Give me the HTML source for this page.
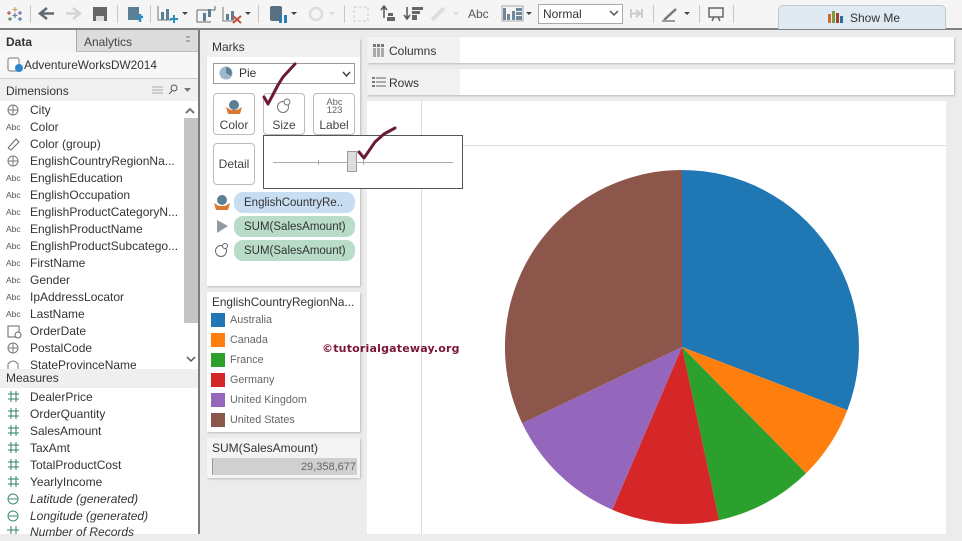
<!DOCTYPE html>
<html><head><meta charset="utf-8"><style>
html,body{margin:0;padding:0;width:962px;height:534px;overflow:hidden;background:#ececec;font-family:"Liberation Sans",sans-serif;}
div{position:absolute;box-sizing:border-box;white-space:nowrap;}
.f{left:30px;font-size:12px;color:#333;height:17px;line-height:17px;}
.a{left:6px;font-size:8.5px;color:#555;height:17px;line-height:17px;}
.btn{background:#fff;border:1px solid #bbb;border-radius:4px;text-align:center;font-size:12px;color:#444;}
.pill{left:234px;width:121px;height:21px;border-radius:9px;font-size:11.5px;line-height:23px;padding-left:10px;color:#333;}
.sw{left:211px;width:14px;height:14px;}
.lg{left:230px;font-size:10.8px;color:#666;height:14px;line-height:15px;}
.card{background:#fff;box-shadow:1px 1px 2px #bbb;}
svg{position:absolute;left:0;top:0;}
</style></head><body>
<div style="left:0;top:0;width:962px;height:30px;background:#f5f5f5;border-bottom:2px solid #7f7f7f"></div>
<div style="left:778px;top:5px;width:168px;height:24px;background:#dfeaf3;border:1px solid #bcc8d2;border-bottom:none;border-radius:5px 5px 0 0"></div>
<div style="left:850px;top:11px;font-size:12px;color:#333">Show Me</div>
<div style="left:538px;top:4px;width:85px;height:20px;background:#fff;border:1px solid #aaa;font-size:12px;line-height:18px;padding-left:4px;color:#333">Normal</div>
<div style="left:468px;top:7px;font-size:12px;color:#555">Abc</div>
<svg width="962" height="534" viewBox="0 0 962 534">
<g fill="none" stroke="#c8c8c8"><path d="M30.500 5V23M117.500 5V23M150.500 5V23M258.500 5V23M344.500 5V23M653.500 5V23M699.500 5V23M733.500 5V23"/></g>
<g stroke-width="1.200" fill="none"><path d="M15 7V12M12.500 9.500H17.500" stroke="#d8a060"/><path d="M9 11V15M7 13H11" stroke="#c05050"/><path d="M20 11V15M18 13H22" stroke="#7a6ab0"/><path d="M15 13V18M12.500 15.500H17.500" stroke="#6a7f9a"/><path d="M10 17V21M8 19H12" stroke="#5a8f5a"/><path d="M20 17V21M18 19H22" stroke="#4a7fb0"/></g>
<path d="M47 8L40 13.500L47 19M40 13.500H54" fill="none" stroke="#5f6b75" stroke-width="2.500"/>
<path d="M73 8L80 13.500L73 19M66 13.500H80" fill="none" stroke="#d5d5d5" stroke-width="2.500"/>
<path d="M93 7H107V21H93Z" fill="#666"/><path d="M96 16H104V21H96Z" fill="#ddd"/>
<rect x="128" y="7" width="11" height="13" fill="#5b7f95"/><path d="M137 17H143M140 14V22" stroke="#2a8fc0" stroke-width="2.500"/>
<path d="M158 6V20H172" fill="none" stroke="#777"/><path d="M161 12h3v8h-3zM166 9h3v11h-3z" fill="#5b7f95"/><path d="M170 19H178M174 15V23" stroke="#2a8fc0" stroke-width="2"/>
<path d="M182 12L188 12L185 15Z" fill="#444"/>
<path d="M197 10H215V6M197 10V22H211" fill="none" stroke="#666"/><path d="M203 13h3v8h-3zM208 9h3v8h-3z" fill="#5b7f95"/>
<path d="M223 7V21H236" fill="none" stroke="#777"/><path d="M226 14h3v6h-3zM231 11h3v9h-3z" fill="#5b7f95"/><path d="M233 16L241 23M241 16L233 23" stroke="#c0503a" stroke-width="2"/>
<path d="M245 12L251 12L248 15Z" fill="#444"/>
<rect x="270" y="6" width="12" height="15" rx="2" fill="#5a6f80"/><path d="M279 15h3v8h-3zM284 15h3v8h-3z" fill="#2a7fb0"/>
<path d="M291 12L297 12L294 15Z" fill="#444"/>
<circle cx="316" cy="14" r="6" fill="none" stroke="#ddd" stroke-width="2.500"/><path d="M329 12L335 12L332 16Z" fill="#ddd"/>
<rect x="354" y="7" width="14" height="14" fill="none" stroke="#ccc" stroke-dasharray="3 2"/>
<path d="M384 7V18M381 10L384 6L387 10" stroke="#555" fill="none" stroke-width="1.500"/><path d="M388 13h5v3h-5zM387 17h8v4h-8z" fill="#666"/>
<path d="M407 7V18M404 15L407 19L410 15" stroke="#555" fill="none" stroke-width="1.500"/><path d="M412 7h11v3h-11zM412 11h8v3h-8zM412 15h5v5h-5z" fill="#666"/>
<path d="M432 20L444 8" stroke="#ddd" stroke-width="4"/><path d="M453 12L459 12L456 16Z" fill="#ddd"/>
<path d="M503 8h3v12h-3zM507 14h3v6h-3zM512 11h3v9h-3zM516 8h6v3h-6zM516 12h6v3h-6zM516 16h6v4h-6z" fill="#6f8798"/><path d="M526 12L532 12L529 15Z" fill="#444"/><rect x="502" y="6" width="21" height="15" fill="none" stroke="#aaa"/>
<path d="M610 11L614 15L618 11" fill="none" stroke="#555" stroke-width="1.500"/>
<path d="M631 9V18M642 9V18M631 13.500H642M636 10L640 13.500L636 17" fill="none" stroke="#ccc" stroke-width="2"/>
<path d="M664 20L676 9" stroke="#777" stroke-width="2.500"/><path d="M662 21H675" stroke="#999" stroke-width="2"/><path d="M684 12L690 12L687 15Z" fill="#444"/>
<path d="M709 8H723V17H709ZM712 21L714 17M720 21L718 17" fill="none" stroke="#666" stroke-width="1.500"/>
<path d="M828 14h3v9h-3z" fill="#c76f2c"/><path d="M832 11h3v12h-3z" fill="#7c9a3a"/><path d="M836 13h3v10h-3z" fill="#a0412f"/><path d="M840 16h3v7h-3z" fill="#2a6f9a"/>
</svg>

<div style="left:0;top:30px;width:200px;height:504px;background:#fff;border-right:2px solid #7d7d7d"></div>
<div style="left:76px;top:30px;width:122px;height:22px;background:#dcdcdc;border-left:1px solid #aaa;border-bottom:1px solid #bbb"></div>
<div style="left:0;top:30px;width:76px;height:22px;background:#f4f4f4"></div>
<div style="left:6px;top:35px;font-size:12px;font-weight:bold;color:#333">Data</div>
<div style="left:84px;top:35px;font-size:12px;color:#444">Analytics</div>
<div style="left:0;top:52px;width:198px;height:27px;background:#f7f7f7;border-bottom:1px solid #ccc"></div>
<div style="left:24px;top:58px;font-size:11.8px;color:#333">AdventureWorksDW2014</div>
<div style="left:0;top:79px;width:198px;height:22px;background:#f0f0f0"></div>
<div style="left:6px;top:84px;font-size:12px;color:#333">Dimensions</div>
<div style="left:0;top:369px;width:198px;height:19px;background:#efefef"></div>
<div style="left:6px;top:371px;font-size:12px;color:#333">Measures</div>
<div style="left:184px;top:118px;width:14px;height:205px;background:#c4c4c4"></div>

<div class="f" style="top:102px">City</div>
<div class="a" style="top:119px">Abc</div><div class="f" style="top:119px">Color</div>
<div class="f" style="top:136px">Color (group)</div>
<div class="f" style="top:153px">EnglishCountryRegionNa...</div>
<div class="a" style="top:170px">Abc</div><div class="f" style="top:170px">EnglishEducation</div>
<div class="a" style="top:187px">Abc</div><div class="f" style="top:187px">EnglishOccupation</div>
<div class="a" style="top:204px">Abc</div><div class="f" style="top:204px">EnglishProductCategoryN...</div>
<div class="a" style="top:221px">Abc</div><div class="f" style="top:221px">EnglishProductName</div>
<div class="a" style="top:238px">Abc</div><div class="f" style="top:238px">EnglishProductSubcatego...</div>
<div class="a" style="top:255px">Abc</div><div class="f" style="top:255px">FirstName</div>
<div class="a" style="top:272px">Abc</div><div class="f" style="top:272px">Gender</div>
<div class="a" style="top:289px">Abc</div><div class="f" style="top:289px">IpAddressLocator</div>
<div class="a" style="top:306px">Abc</div><div class="f" style="top:306px">LastName</div>
<div class="f" style="top:323px">OrderDate</div>
<div class="f" style="top:340px">PostalCode</div>
<div style="left:0;top:357px;width:184px;height:12px;overflow:hidden"><div class="f" style="top:0">StateProvinceName</div></div>
<div class="f" style="top:389px">DealerPrice</div>
<div class="f" style="top:406px">OrderQuantity</div>
<div class="f" style="top:423px">SalesAmount</div>
<div class="f" style="top:440px">TaxAmt</div>
<div class="f" style="top:457px">TotalProductCost</div>
<div class="f" style="top:474px">YearlyIncome</div>
<div class="f" style="top:491px;font-style:italic">Latitude (generated)</div>
<div class="f" style="top:508px;font-style:italic">Longitude (generated)</div>
<div class="f" style="top:524px;font-style:italic">Number of Records</div>

<svg width="200" height="534" viewBox="0 0 200 534" style="z-index:2">
<rect x="8" y="58" width="11" height="13" rx="2" fill="#fff" stroke="#777"/><circle cx="19" cy="68" r="4" fill="#2f86c8"/>
<g fill="none" stroke="#777" stroke-width="1"><circle cx="13" cy="110" r="5"/><path d="M8 110H18M13 105V115"/><circle cx="13" cy="161" r="5"/><path d="M8 161H18M13 156V166"/><circle cx="13" cy="348" r="5"/><path d="M8 348H18M13 343V353"/><path d="M8 369V364Q13 358 18 364V369"/></g>
<path d="M8 148L16 139L19 142L11 150L8 148" fill="none" stroke="#666"/>
<rect x="8" y="326" width="11" height="11" fill="none" stroke="#666"/><circle cx="18" cy="335" r="3" fill="#fff" stroke="#666"/>
<g fill="none" stroke="#2f7f6b" stroke-width="1"><path d="M11 391V402M16 391V402M8 394H19M8 399H19"/><path d="M11 408V419M16 408V419M8 411H19M8 416H19"/><path d="M11 425V436M16 425V436M8 428H19M8 433H19"/><path d="M11 442V453M16 442V453M8 445H19M8 450H19"/><path d="M11 459V470M16 459V470M8 462H19M8 467H19"/><path d="M11 476V487M16 476V487M8 479H19M8 484H19"/><path d="M7 530H19M11 526V534M16 526V534"/></g>
<g fill="none" stroke="#3f8f6b"><circle cx="13" cy="499" r="5"/><path d="M8 499H18"/><circle cx="13" cy="516" r="5"/><path d="M8 516H18"/></g>
<path d="M152 87H163M152 90H163M152 93H163" stroke="#aaa"/><circle cx="174" cy="88" r="3" fill="none" stroke="#555"/><path d="M172 91L169 94" stroke="#555"/>
<path d="M184 88L191 88L187.500 92Z" fill="#777"/>
<path d="M186 113L190 109L194 113" fill="none" stroke="#777" stroke-width="2"/>
<path d="M187 357L191 361L195 357" fill="none" stroke="#555" stroke-width="1.500"/>
<path d="M186 37h4M186 41h4" stroke="#777"/>
</svg>

<div class="card" style="left:207px;top:39px;width:153px;height:247px;background:#fff"></div>
<div style="left:207px;top:39px;width:153px;height:18px;background:#f0f0f0"></div>
<div style="left:212px;top:40px;font-size:12px;color:#333">Marks</div>
<div style="left:213px;top:63px;width:142px;height:21px;background:#fff;border:1px solid #999;font-size:12px;line-height:19px;padding-left:25px;color:#333">Pie</div>
<div class="btn" style="left:213px;top:93px;width:42px;height:42px;padding-top:24px">Color</div>
<div class="btn" style="left:263px;top:93px;width:42px;height:42px;padding-top:24px">Size</div>
<div class="btn" style="left:313px;top:93px;width:42px;height:42px;padding-top:24px">Label</div>
<div style="left:326px;top:99px;font-size:9.5px;line-height:8px;color:#666;text-align:center;white-space:normal;width:17px">Abc<br>123</div>
<div class="btn" style="left:213px;top:143px;width:42px;height:42px;line-height:40px">Detail</div>
<div class="pill" style="top:192px;background:#c8dcf2">EnglishCountryRe..</div>
<div class="pill" style="top:216px;background:#b9dcc8">SUM(SalesAmount)</div>
<div class="pill" style="top:240px;background:#b9dcc8">SUM(SalesAmount)</div>

<div class="card" style="left:207px;top:292px;width:153px;height:140px"></div>
<div style="left:212px;top:295px;font-size:11.8px;color:#333">EnglishCountryRegionNa...</div>
<div class="sw" style="top:313px;background:#1f77b4"></div><div class="lg" style="top:313px">Australia</div>
<div class="sw" style="top:333px;background:#ff7f0e"></div><div class="lg" style="top:333px">Canada</div>
<div class="sw" style="top:353px;background:#2ca02c"></div><div class="lg" style="top:353px">France</div>
<div class="sw" style="top:373px;background:#d62728"></div><div class="lg" style="top:373px">Germany</div>
<div class="sw" style="top:393px;background:#9467bd"></div><div class="lg" style="top:393px">United Kingdom</div>
<div class="sw" style="top:413px;background:#8c564b"></div><div class="lg" style="top:413px">United States</div>

<div class="card" style="left:207px;top:438px;width:153px;height:40px;background:#f4f4f4"></div>
<div style="left:212px;top:441px;font-size:12px;color:#333">SUM(SalesAmount)</div>
<div style="left:212px;top:458px;width:145px;height:17px;background:#d0d0d0;border-left:1px solid #999;font-size:11px;line-height:18px;text-align:right;padding-right:1px;color:#666">29,358,677</div>

<div class="card" style="left:367px;top:37px;width:587px;height:26px"></div>
<div style="left:367px;top:37px;width:93px;height:26px;background:#f2f2f2"></div>
<div style="left:389px;top:44px;font-size:12px;color:#333">Columns</div>
<div class="card" style="left:367px;top:69px;width:587px;height:26px"></div>
<div style="left:367px;top:69px;width:93px;height:26px;background:#f2f2f2"></div>
<div style="left:389px;top:76px;font-size:12px;color:#333">Rows</div>

<div style="left:367px;top:101px;width:579px;height:433px;background:#fff"></div>
<div style="left:421px;top:101px;width:1px;height:433px;background:#ddd"></div>
<div style="left:421px;top:145px;width:525px;height:1px;background:#ddd"></div>

<svg width="962" height="534" viewBox="0 0 962 534">
<path d="M682 347V170A177 177 0 0 1 847.300 410.200Z" fill="#1f77b4"/>
<path d="M682 347L847.300 410.200A177 177 0 0 1 806.100 473.200Z" fill="#ff7f0e"/>
<path d="M682 347L806.100 473.200A177 177 0 0 1 719.100 520.100Z" fill="#2ca02c"/>
<path d="M682 347L719.100 520.100A177 177 0 0 1 612.300 509.700Z" fill="#d62728"/>
<path d="M682 347L612.300 509.700A177 177 0 0 1 522.200 423.200Z" fill="#9467bd"/>
<path d="M682 347L522.200 423.200A177 177 0 0 1 682 170Z" fill="#8c564b"/>
<path d="M373 44h3v3h-3zM377 44h3v3h-3zM381 44h3v3h-3z" fill="#777"/><path d="M374.500 48v9M378.500 48v9M382.500 48v9" stroke="#aaa" stroke-width="3"/>
<path d="M372 77h3v2h-3zM372 81h3v2h-3zM372 85h3v2h-3z" fill="#777"/><path d="M376 78h10M376 82h10M376 86h10" stroke="#aaa" stroke-width="2"/>
<circle cx="226" cy="73" r="6.500" fill="#9db8cc"/><path d="M226 73V67A6 6 0 0 1 231 76Z" fill="#5b7f95"/>
<path d="M343 72L346.500 76L350 72" fill="none" stroke="#444" stroke-width="1.500"/>
<path d="M226 107L231 110H237L242 107L240 114H228Z" fill="#d9782f"/><circle cx="234" cy="105" r="5" fill="#5b7f95"/>
<circle cx="283" cy="107" r="5.500" fill="#fff" stroke="#777"/><circle cx="287" cy="102" r="3" fill="#fff" stroke="#777"/>
<path d="M214 203L219 206H225L230 203L228 210H216Z" fill="#d9782f"/><circle cx="222" cy="200" r="5" fill="#5b7f95"/>
<path d="M217 220L228 226L217 233Z" fill="#8d9ba6"/>
<circle cx="221" cy="251" r="5.500" fill="#fff" stroke="#666"/><circle cx="225" cy="246" r="2.500" fill="#fff" stroke="#666"/>
</svg>

<div style="left:263px;top:135px;width:200px;height:54px;background:#fff;border:1px solid #555"></div>
<svg width="962" height="534" viewBox="0 0 962 534" style="z-index:3">
<path d="M273 162.500H453" stroke="#aaa"/><path d="M318.500 160V165M363.500 160V165" stroke="#aaa"/>
<rect x="347.500" y="151.500" width="9" height="20" fill="#ddd" stroke="#999"/>
<path d="M264 97L268 104L278 85L283 77L295 64" fill="none" stroke="#6a1b3a" stroke-width="3" stroke-linecap="round" stroke-linejoin="round"/>
<path d="M359 152L364 158L375 142L384 134L395 128" fill="none" stroke="#6a1b3a" stroke-width="3" stroke-linecap="round" stroke-linejoin="round"/>
</svg>
<div style="left:322px;top:342px;font-size:11px;font-weight:bold;letter-spacing:.2px;color:#7a1535;font-family:'DejaVu Sans',sans-serif;z-index:4">©tutorialgateway.org</div>
</body></html>
